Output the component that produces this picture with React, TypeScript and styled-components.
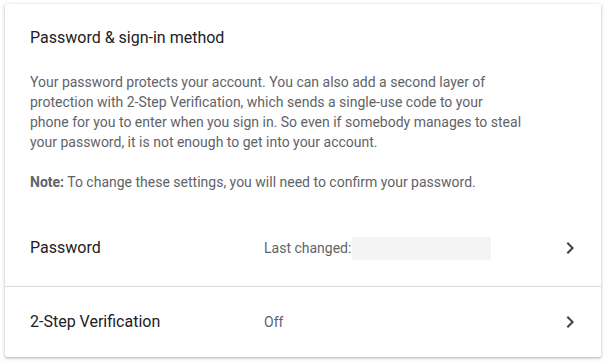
import React from 'react';
import styled, { createGlobalStyle } from 'styled-components';

const GlobalStyle = createGlobalStyle`
  html, body {
    margin: 0;
    padding: 0;
    background: #ffffff;
  }
  body {
    font-family: Roboto, "Liberation Sans", Arial, sans-serif;
    -webkit-font-smoothing: antialiased;
  }
`;

const Page = styled.div`
  padding: 4px 9px 7px 5px;
  width: 610px;
  box-sizing: border-box;
`;

const Card = styled.section`
  background: #ffffff;
  border-radius: 2px;
  box-shadow: 0 1px 2px rgba(60, 64, 67, 0.3), 0 1px 4px 1px rgba(60, 64, 67, 0.12);
  height: 353px;
  display: flex;
  flex-direction: column;
  overflow: hidden;
`;

const Intro = styled.div`
  padding: 22px 25px 18px 25px;
`;

const Title = styled.h2`
  margin: 0 0 22px 0;
  font-size: 16px;
  line-height: 24px;
  font-weight: 400;
  color: #202124;
`;

const Paragraph = styled.p<{ $gap?: number }>`
  margin: 0 0 ${p => p.$gap ?? 0}px 0;
  font-size: 14px;
  line-height: 20px;
  color: #5f6368;

  & b {
    font-weight: 700;
    color: #5f6368;
  }
`;

const Row = styled.div<{ $divider?: boolean; $height: number }>`
  display: flex;
  align-items: center;
  height: ${p => p.$height}px;
  padding: 0 19px 0 25px;
  border-top: ${p => (p.$divider ? '1px solid #dadce0' : 'none')};
  cursor: pointer;
`;

const Label = styled.div`
  width: 234px;
  font-size: 16px;
  line-height: 24px;
  color: #202124;
`;

const Value = styled.div`
  flex: 1;
  display: flex;
  align-items: center;
  font-size: 14px;
  line-height: 20px;
  color: #5f6368;
`;

const Redacted = styled.span`
  display: inline-block;
  width: 139px;
  height: 23px;
  margin-left: 1px;
  background: #f4f4f4;
`;

const Chevron = styled.svg`
  width: 24px;
  height: 24px;
  fill: #3c4043;
  flex: none;
`;

const ChevronIcon = () => (
  <Chevron viewBox="0 0 24 24">
    <path d="M10 6L8.59 7.41 13.17 12l-4.58 4.59L10 18l6-6z" />
  </Chevron>
);

export default function App() {
  return (
    <Page>
      <GlobalStyle />
      <Card>
        <Intro>
          <Title>Password &amp; sign-in method</Title>
          <Paragraph $gap={20}>
            Your password protects your account. You can also add a second layer of
            <br />
            protection with 2-Step Verification, which sends a single-use code to your
            <br />
            phone for you to enter when you sign in. So even if somebody manages to steal
            <br />
            your password, it is not enough to get into your account.
          </Paragraph>
          <Paragraph>
            <b>Note:</b> To change these settings, you will need to confirm your password.
          </Paragraph>
        </Intro>
        <Row $height={76}>
          <Label>Password</Label>
          <Value>
            Last changed:<Redacted />
          </Value>
          <ChevronIcon />
        </Row>
        <Row $divider $height={70}>
          <Label>2-Step Verification</Label>
          <Value>Off</Value>
          <ChevronIcon />
        </Row>
      </Card>
    </Page>
  );
}
